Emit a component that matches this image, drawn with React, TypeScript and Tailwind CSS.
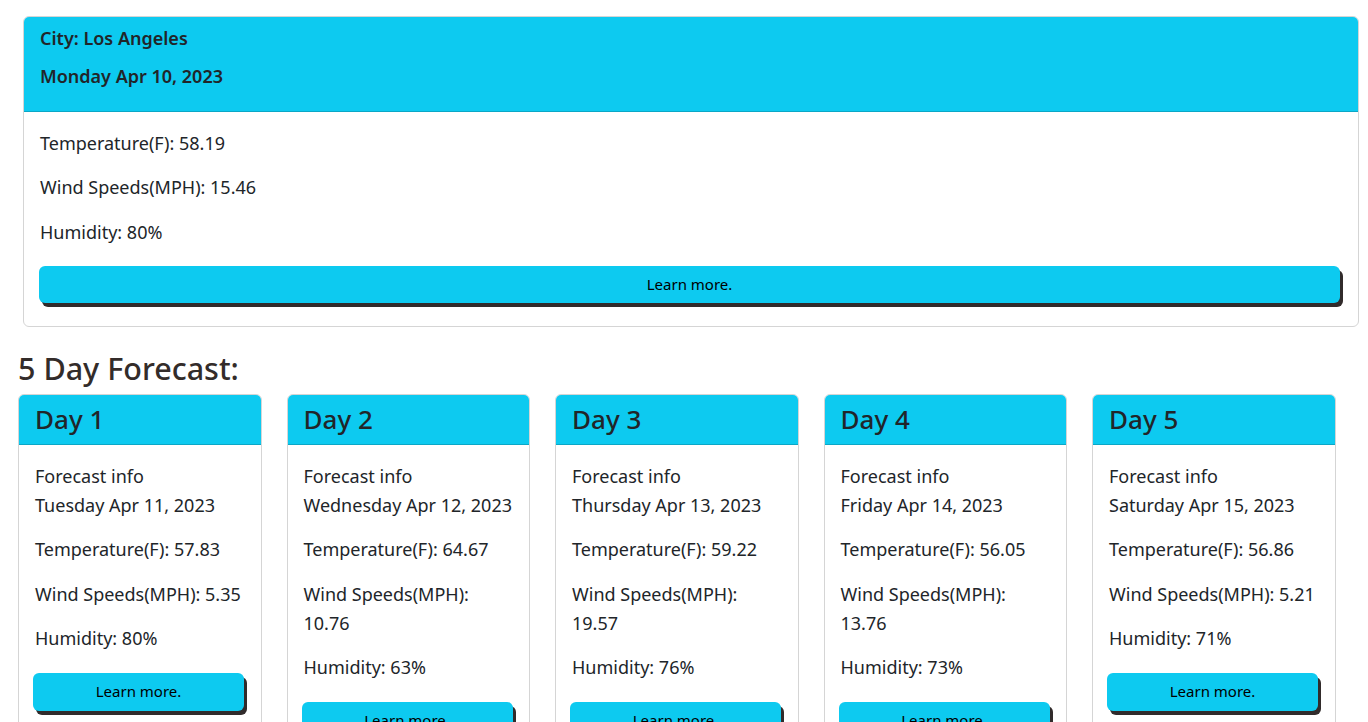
import React from "react";

const days = [
  { n: 1, date: "Tuesday Apr 11, 2023", t: "57.83", w: "5.35", h: "80%" },
  { n: 2, date: "Wednesday Apr 12, 2023", t: "64.67", w: "10.76", h: "63%" },
  { n: 3, date: "Thursday Apr 13, 2023", t: "59.22", w: "19.57", h: "76%" },
  { n: 4, date: "Friday Apr 14, 2023", t: "56.05", w: "13.76", h: "73%" },
  { n: 5, date: "Saturday Apr 15, 2023", t: "56.86", w: "5.21", h: "71%" },
];

const font = { fontFamily: '"Noto Sans", "Open Sans", sans-serif' };

function LearnBtn({ className }: { className: string }) {
  return (
    <div className="pt-[4px]">
      <button
        className={
          "block bg-[#0dcaf0] rounded-[6px] text-black text-[15px] shadow-[3px_4px_0_#312b2b] " +
          className
        }
      >
        Learn more.
      </button>
    </div>
  );
}

export default function App() {
  return (
    <div className="min-h-screen bg-white text-[#212529]" style={font}>
      <div className="ml-[23px] mr-[9px] pt-[16px]">
        <div className="border border-[#d5d5d5] rounded-[6px] overflow-hidden">
          <div className="bg-[#0dcaf0] border-b border-[#0ba7c6] px-4 pt-[7px] pb-[20px] text-[18px] font-semibold leading-[29px]">
            <div className="mb-[9px]">City: Los Angeles</div>
            <div>Monday Apr 10, 2023</div>
          </div>
          <div className="px-4 pt-[16.5px] pb-[23px] text-[18px] leading-[29px]">
            <p className="mb-[15.5px]">Temperature(F): 58.19</p>
            <p className="mb-[15.5px]">Wind Speeds(MPH): 15.46</p>
            <p className="mb-[15.5px]">Humidity: 80%</p>
            <LearnBtn className="ml-[-1px] w-[calc(100%-1px)] h-[37px]" />
          </div>
        </div>
      </div>

      <h2 className="ml-[18px] mt-[22px] mb-[7px] text-[30.5px] font-medium leading-[38px] text-[#332c2a]">
        5 Day Forecast:
      </h2>

      <div className="flex ml-[18px] gap-[25px]">
        {days.map((d) => (
          <div
            key={d.n}
            className="w-[243.5px] shrink-0 border border-[#d5d5d5] rounded-[6px] overflow-hidden"
          >
            <div className="bg-[#0dcaf0] border-b border-[#0ba7c6] px-4 py-2 text-[26px] font-medium leading-[33px]">
              Day {d.n}
            </div>
            <div className="px-4 pt-[16.5px] pb-[22px] text-[18px] leading-[29px]">
              <p className="mb-[15.5px]">
                Forecast info
                <br />
                {d.date}
              </p>
              <p className="mb-[15.5px]">Temperature(F): {d.t}</p>
              <p className="mb-[15.5px]">Wind Speeds(MPH): {d.w}</p>
              <p className="mb-[15.5px]">Humidity: {d.h}</p>
              <LearnBtn className="ml-[-2px] w-[211px] h-[38px]" />
            </div>
          </div>
        ))}
      </div>
    </div>
  );
}
